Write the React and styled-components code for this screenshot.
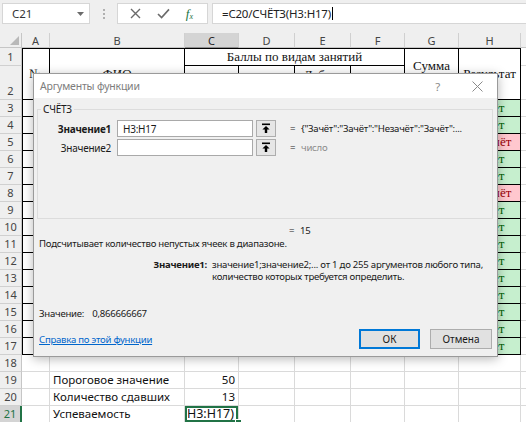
import React from "react";
import styled, { createGlobalStyle } from "styled-components";

const GlobalStyle = createGlobalStyle`
  html, body {
    margin: 0;
    padding: 0;
    background: #fff;
  }
  body {
    font-family: "Noto Sans", "Liberation Sans", sans-serif;
  }
`;

const LETTERS = ["A", "B", "C", "D", "E", "F", "G", "H", ""];

const RESULTS = [
  "Зачёт", "Зачёт", "Незачёт", "Зачёт", "Зачёт", "Незачёт", "Зачёт", "Зачёт",
  "Зачёт", "Зачёт", "Зачёт", "Зачёт", "Зачёт", "Зачёт", "Зачёт",
];

const MERGES = {
  "1-0": { rs: 2 },
  "1-1": { rs: 2 },
  "1-2": { cs: 4 },
  "1-6": { rs: 2 },
  "1-7": { rs: 2 },
};
const COVERED = ["2-0", "2-1", "1-3", "1-4", "1-5", "2-6", "2-7"];

const HEAD = {
  "1-0": "№",
  "1-1": "ФИО",
  "1-2": "Баллы по видам занятий",
  "2-2": "Тесты",
  "2-3": "Практ.",
  "2-4": "Лабор. работы",
  "2-5": "Экзамен",
  "1-6": "Сумма баллов",
  "1-7": "Результат",
};

const BOTTOM = {
  "19-1": "Пороговое значение",
  "19-2": "50",
  "20-1": "Количество сдавших",
  "20-2": "13",
  "21-1": "Успеваемость",
};

const buildCells = () => {
  const cells = [];
  for (let r = 1; r <= 21; r++) {
    for (let c = 0; c < 9; c++) {
      const key = `${r}-${c}`;
      if (COVERED.includes(key)) continue;
      const table = r <= 17 && c <= 7;
      const m = MERGES[key] || {};
      const cell = { key, r, c, rs: m.rs, cs: m.cs, table, text: "", kind: "plain" };
      if (HEAD[key]) {
        cell.text = HEAD[key];
        cell.kind = "head";
      } else if (c === 7 && r >= 3 && r <= 17) {
        cell.text = RESULTS[r - 3];
        cell.kind = "head";
        cell.fill = cell.text === "Зачёт" ? "good" : "bad";
      } else if (BOTTOM[key]) {
        cell.text = BOTTOM[key];
        cell.num = c === 2;
      } else if (key === "21-2") {
        cell.edit = true;
      }
      cells.push(cell);
    }
  }
  return cells;
};

const CELLS = buildCells();

const UploadIcon = () => (
  <svg width="10" height="11" viewBox="0 0 10 11">
    <rect x="1" y="0.5" width="8" height="1.6" fill="#000" />
    <path d="M5 3 L1.4 6.6 H3.8 V10 H6.2 V6.6 H8.6 Z" fill="#000" />
  </svg>
);

const CloseIcon = () => (
  <svg width="11" height="11" viewBox="0 0 11 11">
    <path d="M0.5 0.5 L10.5 10.5 M10.5 0.5 L0.5 10.5" stroke="#8a8a8a" strokeWidth="1" />
  </svg>
);

const App = () => {
  return (
    <Window>
      <GlobalStyle />
      <FormulaBar>
        <NameBox>
          <span>C21</span>
          <svg width="7" height="4" viewBox="0 0 7 4">
            <path d="M0 0 H7 L3.5 4 Z" fill="#6b6b6b" />
          </svg>
        </NameBox>
        <Dots>
          <i />
          <i />
          <i />
        </Dots>
        <FxButtons>
          <svg width="11" height="11" viewBox="0 0 11 11">
            <path d="M1 1 L10 10 M10 1 L1 10" stroke="#6a6a6a" strokeWidth="1.4" />
          </svg>
          <svg width="13" height="11" viewBox="0 0 13 11">
            <path d="M1 6 L4.6 9.6 L12 1.4" stroke="#6a6a6a" strokeWidth="1.6" fill="none" />
          </svg>
          <FxText>
            f<sub>x</sub>
          </FxText>
        </FxButtons>
        <FormulaInput>
          =C20/СЧЁТЗ(H3:H17)<Caret />
        </FormulaInput>
      </FormulaBar>

      <Sheet>
        <Corner>
          <svg width="9" height="9" viewBox="0 0 9 9">
            <path d="M9 0 V9 H0 Z" fill="#b9b9b9" />
          </svg>
        </Corner>
        {LETTERS.map((l, i) => (
          <ColHead key={i} $active={l === "C"}>
            {l}
          </ColHead>
        ))}
        {Array.from({ length: 21 }, (_, i) => (
          <RowHead key={i} $row={i + 1} $active={i + 1 === 21}>
            {i + 1}
          </RowHead>
        ))}
        {CELLS.map((cell) => (
          <Cell
            key={cell.key}
            $r={cell.r}
            $c={cell.c}
            $rs={cell.rs}
            $cs={cell.cs}
            $table={cell.table}
            $kind={cell.kind}
            $fill={cell.fill}
            $num={cell.num}
            $selected={cell.edit}
          >
            {cell.edit ? <EditText>=C20/СЧЁТЗ(H3:H17)</EditText> : cell.text}
          </Cell>
        ))}
      </Sheet>

      <Dialog>
        <TitleBar>
          <Title>Аргументы функции</Title>
          <Help>?</Help>
          <CloseIcon />
        </TitleBar>
        <Body>
          <Group>
            <Legend>СЧЁТЗ</Legend>
            <ArgRow>
              <ArgLabel $bold>Значение1</ArgLabel>
              <ArgInput>H3:H17</ArgInput>
              <PickButton>
                <UploadIcon />
              </PickButton>
              <Eq>=</Eq>
              <ArgValue>{"{\"Зачёт\":\"Зачёт\":\"Незачёт\":\"Зачёт\":..."}</ArgValue>
            </ArgRow>
            <ArgRow>
              <ArgLabel>Значение2</ArgLabel>
              <ArgInput />
              <PickButton>
                <UploadIcon />
              </PickButton>
              <Eq>=</Eq>
              <ArgValue $muted>число</ArgValue>
            </ArgRow>
          </Group>
          <ResultRow>
            <Eq>=</Eq>
            <span>15</span>
          </ResultRow>
          <Description>Подсчитывает количество непустых ячеек в диапазоне.</Description>
          <ArgHelp>
            <ArgHelpLabel>Значение1:</ArgHelpLabel>
            <ArgHelpText>
              значение1;значение2;... от 1 до 255 аргументов любого типа,
              <br />
              количество которых требуется определить.
            </ArgHelpText>
          </ArgHelp>
          <ValueRow>
            <span>Значение:</span>
            <span>0,866666667</span>
          </ValueRow>
          <Footer>
            <HelpLink href="#">Справка по этой функции</HelpLink>
            <Buttons>
              <DialogButton $primary>ОК</DialogButton>
              <DialogButton>Отмена</DialogButton>
            </Buttons>
          </Footer>
        </Body>
      </Dialog>
    </Window>
  );
};

const Window = styled.div`
  position: relative;
  width: 526px;
  height: 422px;
  overflow: hidden;
  background: #fff;
`;

const FormulaBar = styled.div`
  height: 33px;
  box-sizing: border-box;
  display: flex;
  align-items: flex-start;
  padding: 3px 0 0 2px;
  background: #efefef;
  font-size: 11.5px;
  color: #222;
`;

const NameBox = styled.div`
  width: 88px;
  height: 21px;
  box-sizing: border-box;
  border: 1px solid #d6d6d6;
  background: #fff;
  display: flex;
  align-items: center;
  justify-content: space-between;
  padding: 0 5px 0 9px;
  color: #333;
`;

const Dots = styled.div`
  width: 27px;
  height: 21px;
  display: flex;
  flex-direction: column;
  align-items: center;
  justify-content: center;
  gap: 2px;

  i {
    width: 2px;
    height: 2px;
    background: #b0b0b0;
  }
`;

const FxButtons = styled.div`
  width: 91px;
  height: 21px;
  box-sizing: border-box;
  border: 1px solid #d6d6d6;
  background: #fff;
  display: flex;
  align-items: center;
  justify-content: space-around;
  padding: 0 6px 0 4px;
`;

const FxText = styled.span`
  font-family: "Liberation Serif", serif;
  font-style: italic;
  font-size: 13px;
  color: #217346;

  sub {
    font-size: 8px;
    vertical-align: -1px;
  }
`;

const FormulaInput = styled.div`
  flex: 1;
  height: 21px;
  margin-left: 4px;
  box-sizing: border-box;
  border: 1px solid #d6d6d6;
  border-right: none;
  background: #fff;
  display: flex;
  align-items: center;
  padding-left: 9px;
  color: #222;
  letter-spacing: -0.2px;
`;

const Caret = styled.span`
  width: 1px;
  height: 13px;
  margin-left: 1px;
  background: #000;
`;

const Sheet = styled.div`
  display: grid;
  grid-template-columns: 22px 28px 135px 54px 56px 56px 54px 54px 62px 1fr;
  grid-template-rows: 15px 18px 34px repeat(19, 17px);
  font-family: "Noto Sans", "Liberation Sans", sans-serif;
`;

const Corner = styled.div`
  grid-column: 1;
  grid-row: 1;
  background: #efefef;
  border-right: 1px solid #c6c6c6;
  border-bottom: 1px solid #c6c6c6;
  display: flex;
  align-items: flex-end;
  justify-content: flex-end;
  padding: 0 2px 2px 0;
`;

const ColHead = styled.div`
  grid-row: 1;
  background: ${(p) => (p.$active ? "#d4d4d4" : "#efefef")};
  border-right: 1px solid #d0d0d0;
  border-bottom: 1px solid ${(p) => (p.$active ? "#8f8f8f" : "#c6c6c6")};
  color: ${(p) => (p.$active ? "#262626" : "#444")};
  font-size: 11px;
  display: flex;
  align-items: center;
  justify-content: center;
`;

const RowHead = styled.div`
  grid-column: 1;
  grid-row: ${(p) => p.$row + 1};
  background: ${(p) => (p.$active ? "#d4d4d4" : "#efefef")};
  border-bottom: 1px solid #d0d0d0;
  border-right: ${(p) => (p.$active ? "2px solid #217346" : "1px solid #c6c6c6")};
  color: ${(p) => (p.$active ? "#217346" : "#444")};
  font-size: 11px;
  display: flex;
  align-items: flex-end;
  justify-content: center;
  padding-bottom: 1px;
`;

const FILLS = {
  good: { bg: "#c6efce", fg: "#006100" },
  bad: { bg: "#ffc7ce", fg: "#9c0006" },
};

const cellShadow = (p) => {
  const list = [];
  if (p.$table && p.$c === 0) list.push("inset 1px 0 0 #000");
  if (p.$table && p.$r === 1) list.push("inset 0 1px 0 #000");
  if (p.$selected) list.push("inset 0 0 0 2px #217346");
  return list.length ? list.join(", ") : "none";
};

const Cell = styled.div`
  position: relative;
  grid-column: ${(p) => p.$c + 2} / span ${(p) => p.$cs || 1};
  grid-row: ${(p) => p.$r + 1} / span ${(p) => p.$rs || 1};
  border-right: 1px solid ${(p) => (p.$table ? "#000" : "#dadada")};
  border-bottom: 1px solid ${(p) => (p.$table ? "#000" : "#dadada")};
  box-shadow: ${cellShadow};
  background: ${(p) => (p.$fill ? FILLS[p.$fill].bg : "#fff")};
  color: ${(p) => (p.$fill ? FILLS[p.$fill].fg : "#111")};
  font-family: ${(p) =>
    p.$kind === "head" ? '"Liberation Serif", serif' : '"Noto Sans", "Liberation Sans", sans-serif'};
  font-size: ${(p) => (p.$kind === "head" ? "13px" : "11.5px")};
  line-height: ${(p) => (p.$kind === "head" ? "15px" : "14px")};
  display: flex;
  align-items: ${(p) => (p.$kind === "head" ? "center" : "flex-end")};
  justify-content: ${(p) => (p.$kind === "head" ? "center" : p.$num || p.$selected ? "flex-end" : "flex-start")};
  text-align: center;
  padding: 0 3px 1px;
  overflow: ${(p) => (p.$selected ? "visible" : "hidden")};
  z-index: ${(p) => (p.$selected ? 1 : 0)};

  &::after {
    content: "";
    display: ${(p) => (p.$selected ? "block" : "none")};
    position: absolute;
    right: -4px;
    bottom: -4px;
    width: 5px;
    height: 5px;
    background: #217346;
    border: 1px solid #fff;
  }
`;

const EditText = styled.span`
  display: flex;
  justify-content: flex-end;
  white-space: nowrap;
  overflow: hidden;
  width: 100%;
  padding-right: 1px;
  font-size: 12.5px;
`;

const Dialog = styled.div`
  position: absolute;
  left: 33px;
  top: 73px;
  width: 465px;
  height: 284px;
  box-sizing: border-box;
  border: 1px solid #9a9a9a;
  box-shadow: 0 2px 10px rgba(0, 0, 0, 0.28);
  display: flex;
  flex-direction: column;
  font-family: "Noto Sans", "Liberation Sans", sans-serif;
  font-size: 9.6px;
  letter-spacing: -0.25px;
  color: #1a1a1a;
  z-index: 2;
`;

const TitleBar = styled.div`
  height: 24px;
  flex: none;
  background: #fff;
  display: flex;
  align-items: center;
  padding: 0 14px 0 6px;
`;

const Title = styled.span`
  flex: 1;
  font-size: 10.5px;
  letter-spacing: -0.2px;
  color: #7d7d7d;
`;

const Help = styled.span`
  font-size: 11.5px;
  color: #8a8a8a;
  margin-right: 32px;
`;

const Body = styled.div`
  flex: 1;
  background: #f0f0f0;
  display: flex;
  flex-direction: column;
  padding: 0 4px 0 3px;
`;

const Group = styled.fieldset`
  margin: 4px 0 0;
  padding: 0;
  height: 117px;
  box-sizing: border-box;
  border: 1px solid #dcdcdc;
  min-width: 0;
`;

const Legend = styled.legend`
  margin-left: 3px;
  padding: 0 2px;
  font-size: 10px;
  line-height: 14px;
  color: #1a1a1a;
`;

const ArgRow = styled.div`
  display: flex;
  align-items: center;
  height: 17px;
  margin-top: 4px;

  & + & {
    margin-top: 2px;
  }
`;

const ArgLabel = styled.span`
  width: 73px;
  text-align: right;
  font-size: 10px;
  font-weight: ${(p) => (p.$bold ? 700 : 400)};
`;

const ArgInput = styled.div`
  width: 136px;
  height: 17px;
  margin-left: 6px;
  box-sizing: border-box;
  border: 1px solid #a9a9a9;
  background: #fff;
  display: flex;
  align-items: center;
  padding-left: 5px;
  font-size: 10px;
`;

const PickButton = styled.div`
  width: 20px;
  height: 17px;
  margin-left: 3px;
  box-sizing: border-box;
  border: 1px solid #adadad;
  background: #e6e6e6;
  display: flex;
  align-items: center;
  justify-content: center;
`;

const Eq = styled.span`
  margin-left: 14px;
  width: 11px;
`;

const ArgValue = styled.span`
  white-space: nowrap;
  color: ${(p) => (p.$muted ? "#8c8c8c" : "#1a1a1a")};
`;

const ResultRow = styled.div`
  display: flex;
  align-items: center;
  height: 14px;
  margin-top: 4px;
  padding-left: 238px;
`;

const Description = styled.div`
  line-height: 14px;
  padding-left: 2px;
`;

const ArgHelp = styled.div`
  display: grid;
  grid-template-columns: 170px 1fr;
  column-gap: 5px;
  margin-top: 8px;
  line-height: 12px;
`;

const ArgHelpLabel = styled.span`
  text-align: right;
  font-weight: 700;
`;

const ArgHelpText = styled.span`
  white-space: nowrap;
`;

const ValueRow = styled.div`
  margin-top: auto;
  margin-bottom: 8px;
  padding-left: 2px;
  line-height: 14px;
  display: flex;
  gap: 8px;
`;

const Footer = styled.div`
  display: flex;
  align-items: center;
  justify-content: space-between;
  padding: 0 1px 7px 2px;
`;

const HelpLink = styled.a`
  color: #0066cc;
  text-decoration: underline;
`;

const Buttons = styled.div`
  display: flex;
  gap: 10px;
`;

const DialogButton = styled.button`
  width: ${(p) => (p.$primary ? "61px" : "62px")};
  height: 20px;
  box-sizing: border-box;
  padding: 0;
  font-family: inherit;
  font-size: 10px;
  color: #1a1a1a;
  background: #e1e1e1;
  border: ${(p) => (p.$primary ? "2px solid #0078d7" : "1px solid #adadad")};
`;

export default App;
